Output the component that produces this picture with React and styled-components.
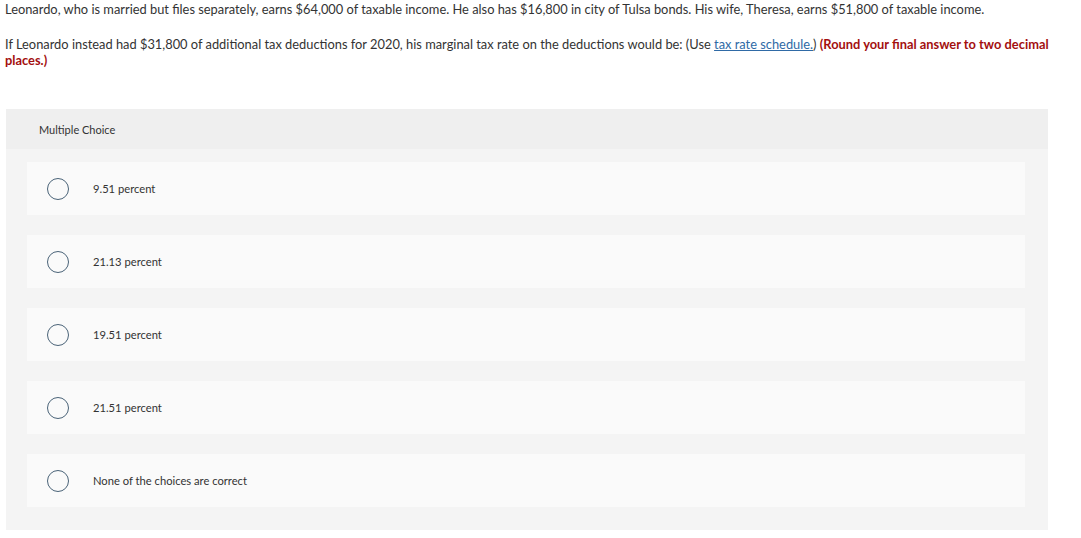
import React from "react";
import styled, { createGlobalStyle } from "styled-components";

const GlobalStyle = createGlobalStyle`
  body {
    margin: 0;
    background: #ffffff;
    font-family: "Lato", "Liberation Sans", sans-serif;
    color: #333333;
  }
`;

const Page = styled.div`
  width: 1081px;
  height: 538px;
  padding: 0 0 0 5px;
  box-sizing: border-box;
`;

const Question = styled.p`
  margin: 0;
  font-size: 12.85px;
  line-height: 16px;
  padding-top: 1px;
`;

const Prompt = styled(Question)`
  margin-top: 19px;
  padding-top: 0;
  width: 1050px;
`;

const Link = styled.a`
  color: #2f6aa6;
  text-decoration: underline;
`;

const Emphasis = styled.strong`
  color: #a30f0f;
  font-weight: 700;
`;

const Panel = styled.section`
  margin: 41px 0 0 1px;
  width: 1042px;
  background: #f4f4f4;
  padding-bottom: 23px;
`;

const PanelHeader = styled.div`
  height: 40px;
  background: #efefef;
  display: flex;
  align-items: center;
  padding-left: 33px;
  font-size: 11px;
  color: #333;
`;

const Choices = styled.div`
  display: flex;
  flex-direction: column;
  gap: 20px;
  padding: 13px 23px 0 21px;
`;

const Choice = styled.label`
  height: 53px;
  background: #fafafa;
  display: flex;
  align-items: center;
  padding-left: 20px;
  font-size: 11.2px;
  color: #333;
`;

const Radio = styled.span`
  width: 20px;
  height: 20px;
  border: 1.5px solid #4a6378;
  border-radius: 50%;
  flex: none;
  margin-right: 24px;
`;

const choices = [
  "9.51 percent",
  "21.13 percent",
  "19.51 percent",
  "21.51 percent",
  "None of the choices are correct",
];

export default function App() {
  return (
    <>
      <GlobalStyle />
      <Page>
        <Question>
          Leonardo, who is married but files separately, earns $64,000 of taxable income. He also has
          $16,800 in city of Tulsa bonds. His wife, Theresa, earns $51,800 of taxable income.
        </Question>
        <Prompt>
          If Leonardo instead had $31,800 of additional tax deductions for 2020, his marginal tax rate
          on the deductions would be: (Use <Link href="#">tax rate schedule.</Link>){" "}
          <Emphasis>(Round your final answer to two decimal places.)</Emphasis>
        </Prompt>
        <Panel>
          <PanelHeader>Multiple Choice</PanelHeader>
          <Choices>
            {choices.map((c) => (
              <Choice key={c}>
                <Radio />
                {c}
              </Choice>
            ))}
          </Choices>
        </Panel>
      </Page>
    </>
  );
}
